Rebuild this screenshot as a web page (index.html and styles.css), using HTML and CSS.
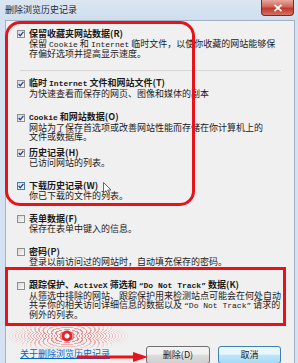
FILE: index.html
```html
<!DOCTYPE html>
<html>
<head>
    <meta charset="utf-8">
    <title>删除浏览历史记录</title>
    <link rel="stylesheet" href="styles.css">
</head>
<body>
<div class="window">
    <div class="titlebar">
        <span class="title">删除浏览历史记录</span>
        <span class="close">
            <svg width="10" height="8" viewBox="0 0 10 8"><path d="M1.5 0.8 L8.5 7.2 M8.5 0.8 L1.5 7.2" stroke="#fff" stroke-width="1.8"/></svg>
        </span>
    </div>
    <div class="client">
        <ul class="options">
            <li class="option">
                <span class="check checked"></span>
                <b>保留收藏夹网站数据(R)</b>
                <p>保留 <span class="en">Cookie</span> 和 <span class="en">Internet</span> 临时文件，以使你收藏的网站能够保<br>存偏好选项并提高显示速度。</p>
            </li>
            <li class="separator"></li>
            <li class="option">
                <span class="check checked"></span>
                <b>临时 <span class="en">Internet</span> 文件和网站文件(T)</b>
                <p>为快速查看而保存的网页、图像和媒体的副本</p>
            </li>
            <li class="option">
                <span class="check checked"></span>
                <b><span class="en">Cookie</span> 和网站数据(O)</b>
                <p>网站为了保存首选项或改善网站性能而存储在你计算机上的<br>文件或数据库。</p>
            </li>
            <li class="option close-up">
                <span class="check checked"></span>
                <b>历史记录(H)</b>
                <p>已访问网站的列表。</p>
            </li>
            <li class="option">
                <span class="check checked hover"></span>
                <b>下载历史记录(W)</b>
                <p>你已下载的文件的列表。</p>
            </li>
            <li class="option">
                <span class="check"></span>
                <b>表单数据(F)</b>
                <p>保存在表单中键入的信息。</p>
            </li>
            <li class="option">
                <span class="check"></span>
                <b>密码(P)</b>
                <p>登录以前访问过的网站时，自动填充保存的密码。</p>
            </li>
            <li class="option">
                <span class="check"></span>
                <b>跟踪保护、<span class="en">ActiveX</span> 筛选和 <span class="en">“Do Not Track”</span> 数据(K)</b>
                <p>从筛选中排除的网站、跟踪保护用来检测站点可能会在何处自动<br>共享你的相关访问详细信息的数据以及 <span class="en">“Do Not Track”</span> 请求的<br>例外的列表。</p>
            </li>
        </ul>
        <div class="footer">
            <a class="help" href="#">关于删除浏览历史记录</a>
            <div class="buttons">
                <button>删除(D)</button>
                <button class="focused">取消</button>
            </div>
        </div>
    </div>
</div>

<div class="mark mark-round"></div>
<div class="mark mark-box"></div>
<div class="ripple"></div>
<svg class="arrow" width="76" height="12" viewBox="0 0 76 12">
    <path d="M2 6 H62" stroke="#e8121b" stroke-width="3"/>
    <path d="M58 1 L73 6 L58 11 Z" fill="#e8121b"/>
</svg>
<svg class="cursor" width="9" height="14" viewBox="0 0 9 14">
    <path d="M0.5 0.5 V11 L3 8.6 L5 13 L6.6 12.3 L4.7 8 H8 Z" fill="#fff" stroke="#444" stroke-width="0.8"/>
</svg>
</body>
</html>
```

FILE: styles.css
```css
html, body {
    margin: 0;
    padding: 0;
}

body {
    position: relative;
    width: 298px;
    height: 363px;
    overflow: hidden;
    background-color: #d4e2f1;
    font-family: "Noto Sans CJK SC", sans-serif;
    font-size: 9px;
    color: #1a1a1a;
}

.window {
    display: flex;
    flex-direction: column;
    height: 100%;
}

.titlebar {
    display: flex;
    align-items: flex-start;
    justify-content: space-between;
    height: 21px;
    padding: 0 4px 0 5px;
    background: linear-gradient(#dbe6f2, #cfdeee);
}

.title {
    line-height: 20px;
    color: #1e2838;
}

.close {
    display: flex;
    align-items: center;
    justify-content: center;
    box-sizing: border-box;
    width: 33px;
    height: 16px;
    border: 1px solid #7a2b25;
    border-top: none;
    border-radius: 0 0 4px 4px;
    background: linear-gradient(#e6a89f, #d0675a 45%, #c0392b 55%, #d4715f);
}

.client {
    flex: 1;
    display: flex;
    flex-direction: column;
    margin: 0 3px 0 5px;
    border: 1px solid #a3b3c6;
    border-bottom: none;
    background-color: #f0f0f0;
}

.options {
    list-style: none;
    margin: 0;
    padding: 8px 0 0 11px;
}

.option {
    display: grid;
    grid-template-columns: 8px auto;
    column-gap: 4px;
    white-space: nowrap;
}

.option + .option {
    margin-top: 14px;
}

.option.close-up {
    margin-top: 7px;
}

.option b {
    grid-column: 2;
    line-height: 10px;
    font-weight: 700;
}

.option p {
    grid-column: 2;
    margin: 0;
    line-height: 9px;
}

.en {
    font-family: "Liberation Mono", monospace;
    font-size: 8px;
}

.check {
    grid-row: 1;
    grid-column: 1;
    align-self: center;
    box-sizing: border-box;
    width: 8px;
    height: 8px;
    border: 1px solid #8e8f8f;
    background: linear-gradient(135deg, #d8d8d8, #fafafa);
}

.check.checked {
    background: url("data:image/svg+xml,%3Csvg xmlns='http://www.w3.org/2000/svg' width='6' height='6' viewBox='0 0 6 6'%3E%3Cpath d='M0.7 3 L2.3 4.8 L5.4 0.8' fill='none' stroke='%23283f8c' stroke-width='1.3'/%3E%3C/svg%3E") center / 6px 6px no-repeat,
        linear-gradient(135deg, #d8d8d8, #fafafa);
}

.check.hover {
    border-color: #3c7fb1;
    background-color: #dff0fb;
}

.separator {
    height: 1px;
    margin: 12px 13px 7px 3px;
    background-color: #d5d5d5;
}

.footer {
    display: flex;
    justify-content: space-between;
    align-items: flex-start;
    padding: 27px 13px 0 14px;
}

.help {
    margin-top: 2px;
    color: #0066cc;
    text-decoration: underline;
    line-height: 12px;
}

.buttons {
    display: flex;
    gap: 8px;
}

.buttons button {
    box-sizing: border-box;
    width: 64px;
    height: 18px;
    padding: 0;
    border: 1px solid #707070;
    border-radius: 3px;
    background: linear-gradient(#f2f2f2 45%, #dddddd 50%, #cfcfcf);
    font-family: "Noto Sans CJK SC", sans-serif;
    font-size: 9px;
    line-height: 10px;
    color: #1a1a1a;
}

.buttons button.focused {
    width: 63px;
    border-color: #3c7fb1;
    background: linear-gradient(#eaf6fd 45%, #bee6fd 50%, #a7d9f5);
}

/* red annotations drawn over the dialog */
.mark {
    position: absolute;
    box-sizing: border-box;
    border: 3px solid #e8121b;
}

.mark-round {
    left: 5px;
    top: 21px;
    width: 190px;
    height: 185px;
    border-radius: 15px;
}

.mark-box {
    left: 5px;
    top: 267px;
    width: 281px;
    height: 59px;
}

.ripple {
    position: absolute;
    left: 7px;
    top: 326px;
    width: 130px;
    height: 24px;
    background:
        radial-gradient(circle at 60px 10px, #fff 0 2px, #e8232a 3px 5px, transparent 6px),
        repeating-radial-gradient(ellipse 60px 14px at 60px 10px, rgba(228, 40, 40, 0.5) 0 1px, transparent 1px 3px);
    -webkit-mask-image: radial-gradient(ellipse 65px 15px at 60px 10px, #000 35%, transparent 100%);
    mask-image: radial-gradient(ellipse 65px 15px at 60px 10px, #000 35%, transparent 100%);
}

.arrow {
    position: absolute;
    left: 75px;
    top: 351px;
}

.cursor {
    position: absolute;
    left: 103px;
    top: 182px;
}
```
